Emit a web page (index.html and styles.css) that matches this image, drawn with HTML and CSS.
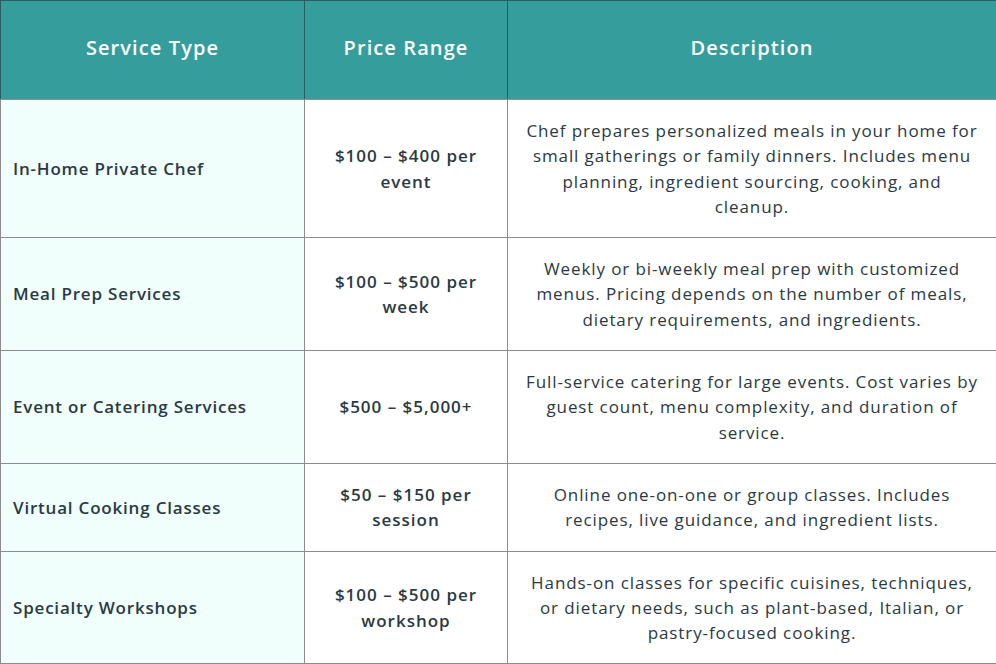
FILE: index.html
```html
<!DOCTYPE html>
<html lang="en">
<head>
<meta charset="utf-8">
<title>Private Chef Services Pricing</title>
<link rel="stylesheet" href="styles.css">
</head>
<body>
<table class="pricing">
  <colgroup>
    <col class="col-type">
    <col class="col-price">
    <col class="col-desc">
  </colgroup>
  <thead>
    <tr>
      <th>Service Type</th>
      <th>Price Range</th>
      <th>Description</th>
    </tr>
  </thead>
  <tbody>
    <tr class="r1">
      <td class="type">In-Home Private Chef</td>
      <td class="price">$100 – $400 per event</td>
      <td class="desc">Chef prepares personalized meals in your home for small gatherings or family dinners. Includes menu planning, ingredient sourcing, cooking, and cleanup.</td>
    </tr>
    <tr>
      <td class="type">Meal Prep Services</td>
      <td class="price">$100 – $500 per week</td>
      <td class="desc">Weekly or bi-weekly meal prep with customized menus. Pricing depends on the number of meals, dietary requirements, and ingredients.</td>
    </tr>
    <tr>
      <td class="type">Event or Catering Services</td>
      <td class="price">$500 – $5,000+</td>
      <td class="desc">Full-service catering for large events. Cost varies by guest count, menu complexity, and duration of service.</td>
    </tr>
    <tr>
      <td class="type">Virtual Cooking Classes</td>
      <td class="price">$50 – $150 per session</td>
      <td class="desc">Online one-on-one or group classes. Includes recipes, live guidance, and ingredient lists.</td>
    </tr>
    <tr>
      <td class="type">Specialty Workshops</td>
      <td class="price">$100 – $500 per workshop</td>
      <td class="desc">Hands-on classes for specific cuisines, techniques, or dietary needs, such as plant-based, Italian, or pastry-focused cooking.</td>
    </tr>
  </tbody>
</table>
</body>
</html>
```
FILE: styles.css
```css
html, body {
  margin: 0;
  padding: 0;
  background: #ffffff;
}
body {
  font-family: "Open Sans", "Liberation Sans", sans-serif;
  color: #2a3944;
}
.pricing {
  width: 996px;
  border-collapse: collapse;
  table-layout: fixed;
}
.col-type { width: 304px; }
.col-price { width: 203px; }
.col-desc { width: 489px; }

.pricing th {
  background: #369d9d;
  color: #ffffff;
  font-size: 20px;
  font-weight: 600;
  letter-spacing: 1.1px;
  height: 99px;
  padding: 0 12px 5px;
  text-align: center;
  vertical-align: middle;
  border: 1px solid #2a5c5e;
  border-bottom: 1px solid #8a8f90;
  box-sizing: border-box;
}
.pricing td {
  border: 1px solid #8c8c8c;
  padding: 18px 12px;
  font-size: 17px;
  line-height: 25.3px;
  letter-spacing: 0.9px;
  vertical-align: middle;
}
.pricing td.type {
  background: #f0fffc;
  font-weight: 600;
  letter-spacing: 0.8px;
  text-align: left;
}
.pricing td.price {
  font-weight: 600;
  letter-spacing: 1px;
  text-align: center;
  padding-left: 26px;
  padding-right: 26px;
}
.pricing td.desc {
  text-align: center;
  font-weight: 400;
  padding-left: 16px;
  padding-right: 16px;
}
```
